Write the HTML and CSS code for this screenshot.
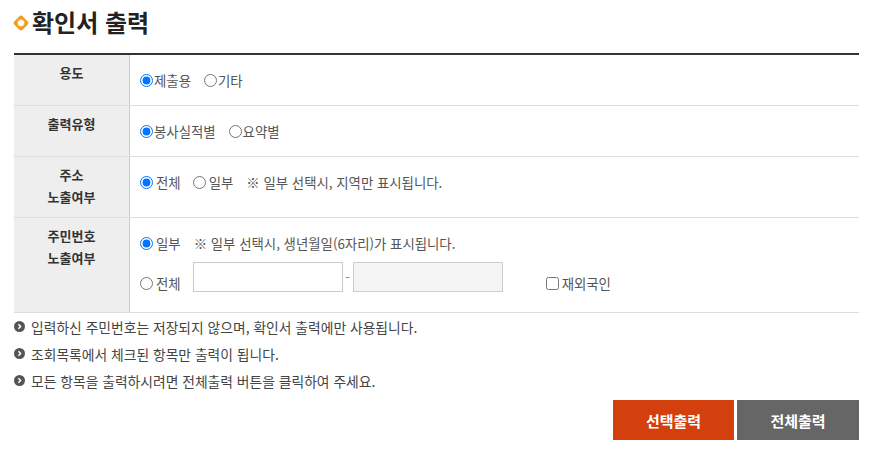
FILE: index.html
```html
<!DOCTYPE html>
<html lang="ko">
<head>
<meta charset="utf-8">
<title>확인서 출력</title>
<link rel="stylesheet" href="styles.css">
</head>
<body>
<div class="wrap">
  <h2 class="title">
    <svg class="title-icon" width="16" height="16" viewBox="0 0 16 16" aria-hidden="true">
      <rect x="2.1" y="2.1" width="11.8" height="11.8" rx="2.6" transform="rotate(45 8 8)" fill="#f39a1e"/>
      <circle cx="8" cy="8" r="4.2" fill="#f8b54a"/>
      <circle cx="8" cy="8" r="3" fill="#fff"/>
    </svg>
    확인서 출력
  </h2>

  <div class="form">
    <div class="row r1">
      <div class="th">용도</div>
      <div class="td">
        <div class="line">
          <label class="opt"><input type="radio" name="use" checked>제출용</label>
          <label class="opt"><input type="radio" name="use">기타</label>
        </div>
      </div>
    </div>
    <div class="row r2">
      <div class="th">출력유형</div>
      <div class="td">
        <div class="line">
          <label class="opt"><input type="radio" name="type" checked>봉사실적별</label>
          <label class="opt"><input type="radio" name="type">요약별</label>
        </div>
      </div>
    </div>
    <div class="row r3">
      <div class="th">주소<br>노출여부</div>
      <div class="td">
        <div class="line">
          <label class="opt wide"><input type="radio" name="addr" checked>전체</label>
          <label class="opt wide"><input type="radio" name="addr">일부</label>
          <span class="hint">※ 일부 선택시, 지역만 표시됩니다.</span>
        </div>
      </div>
    </div>
    <div class="row r4">
      <div class="th">주민번호<br>노출여부</div>
      <div class="td">
        <div class="line">
          <label class="opt wide"><input type="radio" name="rrn" checked>일부</label>
          <span class="hint">※ 일부 선택시, 생년월일(6자리)가 표시됩니다.</span>
        </div>
        <div class="line2">
          <label class="opt wide low"><input type="radio" name="rrn">전체</label>
          <input type="text" class="box">
          <span class="dash">-</span>
          <input type="text" class="box box-off" disabled>
          <label class="chk low"><input type="checkbox">재외국인</label>
        </div>
      </div>
    </div>
  </div>

  <ul class="notes">
    <li><span class="bullet"><svg width="11" height="11" viewBox="0 0 11 11"><circle cx="5.5" cy="5.5" r="5.5" fill="#555"/><path d="M4.4 3.2 L6.6 5.5 L4.4 7.8" fill="none" stroke="#fff" stroke-width="1.5"/></svg></span>입력하신 주민번호는 저장되지 않으며, 확인서 출력에만 사용됩니다.</li>
    <li><span class="bullet"><svg width="11" height="11" viewBox="0 0 11 11"><circle cx="5.5" cy="5.5" r="5.5" fill="#555"/><path d="M4.4 3.2 L6.6 5.5 L4.4 7.8" fill="none" stroke="#fff" stroke-width="1.5"/></svg></span>조회목록에서 체크된 항목만 출력이 됩니다.</li>
    <li><span class="bullet"><svg width="11" height="11" viewBox="0 0 11 11"><circle cx="5.5" cy="5.5" r="5.5" fill="#555"/><path d="M4.4 3.2 L6.6 5.5 L4.4 7.8" fill="none" stroke="#fff" stroke-width="1.5"/></svg></span>모든 항목을 출력하시려면 전체출력 버튼을 클릭하여 주세요.</li>
  </ul>

  <div class="btns">
    <button class="btn btn-sel">선택출력</button>
    <button class="btn btn-all">전체출력</button>
  </div>
</div>
</body>
</html>
```

FILE: styles.css
```css
* { box-sizing: border-box; }
body {
  margin: 0;
  background: #fff;
  font-family: "Noto Sans CJK KR", "Noto Sans", sans-serif;
  color: #444;
}
.wrap {
  width: 859px;
  padding-left: 14px;
}
.title {
  margin: 6px 0 15px;
  height: 32px;
  line-height: 32px;
  font-size: 24px;
  font-weight: 700;
  color: #222;
  display: flex;
  align-items: center;
  gap: 3px;
}
.title-icon { flex: none; margin-left: -1px; margin-top: 2px; }

.form {
  border-top: 2px solid #333;
}
.row {
  display: grid;
  grid-template-columns: 116px 1fr;
  border-bottom: 1px solid #ddd;
}
.r1, .r2 { height: 51px; }
.r3 { height: 61px; }
.r4 { height: 95px; }
.th {
  background: #eee;
  border-right: 1px solid #ccc;
  text-align: center;
  font-size: 13px;
  font-weight: 700;
  color: #333;
  line-height: 22px;
  padding-top: 7px;
}
.td {
  padding: 13px 0 0 10px;
  font-size: 13.4px;
  color: #555;
}
.line {
  display: flex;
  align-items: center;
  height: 24px;
}
.opt {
  display: inline-flex;
  align-items: center;
  margin-right: 13px;
}
.opt input {
  width: 13px;
  height: 13px;
  margin: 0 1px 0 0;
}
.opt.wide input { margin-right: 3px; }
.opt.wide { margin-right: 12px; }
.hint { margin-left: 1px; }
.line2 {
  display: flex;
  align-items: center;
  margin-top: 7px;
  height: 30px;
}
.low { position: relative; top: 6px; }
.box {
  width: 150px;
  height: 30px;
  border: 1px solid #ccc;
  background: #fff;
  margin: 0;
  padding: 0 6px;
}
.box-off { background: #f5f5f5; }
.dash { width: 10px; text-align: center; color: #888; }
.chk {
  display: inline-flex;
  align-items: center;
  margin-left: 43px;
}
.chk input {
  width: 13px;
  height: 13px;
  margin: 0 3px 0 0;
}

.notes {
  list-style: none;
  margin: 0;
  padding: 0;
  font-size: 13.8px;
  color: #444;
}
.notes li {
  display: flex;
  align-items: center;
  height: 27px;
}
.bullet {
  display: inline-flex;
  width: 11px;
  height: 11px;
  margin-right: 6px;
}
.btns {
  display: flex;
  justify-content: flex-end;
  gap: 3px;
  margin-top: 6px;
}
.btn {
  width: 122px;
  height: 40px;
  border: 0;
  color: #fff;
  font-family: inherit;
  font-size: 15px;
  font-weight: 700;
  cursor: pointer;
}
.btn-sel { background: #d43f0e; width: 121px; }
.btn-all { background: #666; }
```
